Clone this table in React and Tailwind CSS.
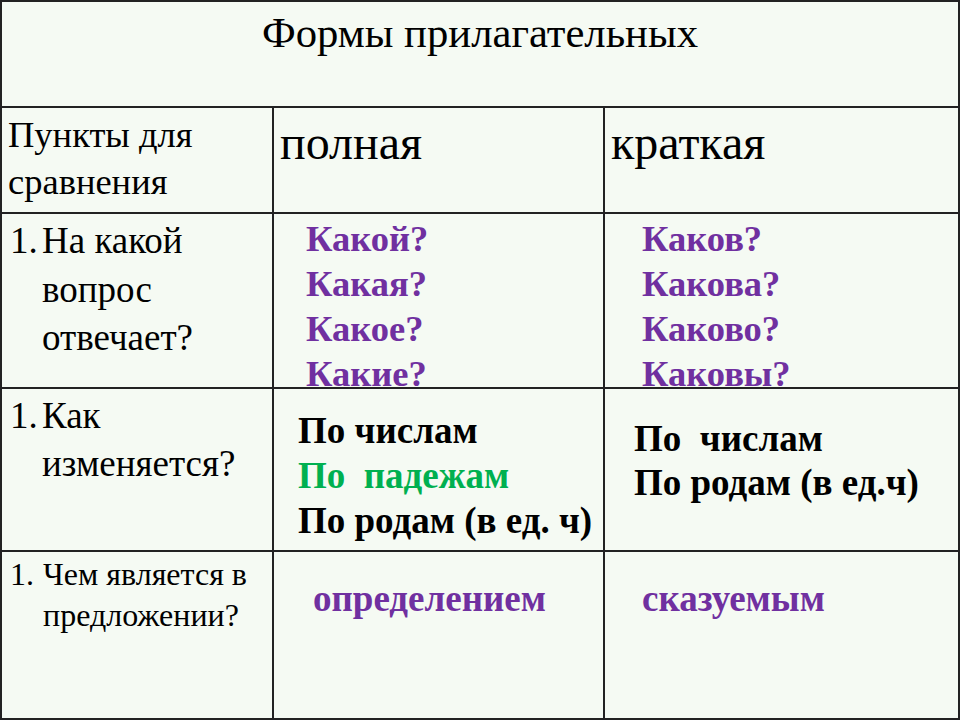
import React from 'react';

const serif = { fontFamily: '"Liberation Serif", "Times New Roman", serif' };

function Numbered({ children, size = 'text-[37px]', lead = 'leading-[48px]', gap = 'w-[32px]' }) {
  return (
    <div className={`flex ${size} ${lead} text-black`}>
      <span className={`${gap} shrink-0`}>1.</span>
      <div>{children}</div>
    </div>
  );
}

export default function App() {
  const cell = 'bg-[#f5faf3] border-r-2 border-b-2 border-[#222]';

  return (
    <div
      className="w-[960px] h-[720px] overflow-hidden border-l-2 border-t-2 border-[#222] grid grid-cols-[272px_331px_355px] grid-rows-[106px_106px_175px_163px_168px]"
      style={serif}
    >
      {/* Title */}
      <div className={`${cell} col-span-3 pt-[10px] text-center text-[42.7px] leading-none text-black`}>
        Формы прилагательных
      </div>

      {/* Header */}
      <div className={`${cell} pl-[6px] pt-[3px] text-[36.5px] leading-[47px] text-black`}>
        Пункты для<br />сравнения
      </div>
      <div className={`${cell} pl-[6px] pt-[11px] text-[48px] leading-none text-black`}>полная</div>
      <div className={`${cell} pl-[6px] pt-[11px] text-[48px] leading-none text-black`}>краткая</div>

      {/* Вопрос */}
      <div className={`${cell} pl-[8px] pt-[3px]`}>
        <Numbered lead="leading-[48.5px]">
          На какой<br />вопрос<br />отвечает?
        </Numbered>
      </div>
      <div className={`${cell} pl-[32px] pt-[2px] text-[36.5px] leading-[45px] font-bold text-[#7030a0]`}>
        Какой?<br />Какая?<br />Какое?<br />Какие?
      </div>
      <div className={`${cell} pl-[37px] pt-[2px] text-[36.5px] leading-[45px] font-bold text-[#7030a0]`}>
        Каков?<br />Какова?<br />Каково?<br />Каковы?
      </div>

      {/* Изменение */}
      <div className={`${cell} pl-[8px] pt-[3px]`}>
        <Numbered lead="leading-[48px]">
          Как<br />изменяется?
        </Numbered>
      </div>
      <div className={`${cell} pl-[24px] pt-[19px] text-[37px] leading-[45px] font-bold text-black`}>
        <div>По числам</div>
        <div className="text-[#00b050] whitespace-pre">По  падежам</div>
        <div className="whitespace-nowrap">По родам (в ед. ч)</div>
      </div>
      <div className={`${cell} pl-[29px] pt-[28px] text-[37px] leading-[44px] font-bold text-black`}>
        <div className="whitespace-pre">По  числам</div>
        <div className="whitespace-nowrap">По родам (в ед.ч)</div>
      </div>

      {/* Роль */}
      <div className={`${cell} pl-[8px] pt-[2px]`}>
        <Numbered size="text-[32px]" lead="leading-[41px]" gap="w-[33px]">
          Чем является в<br />предложении?
        </Numbered>
      </div>
      <div className={`${cell} pl-[39px] pt-[28px] text-[37px] leading-none font-bold text-[#7030a0]`}>
        определением
      </div>
      <div className={`${cell} pl-[37px] pt-[28px] text-[37px] leading-none font-bold text-[#7030a0]`}>
        сказуемым
      </div>
    </div>
  );
}
